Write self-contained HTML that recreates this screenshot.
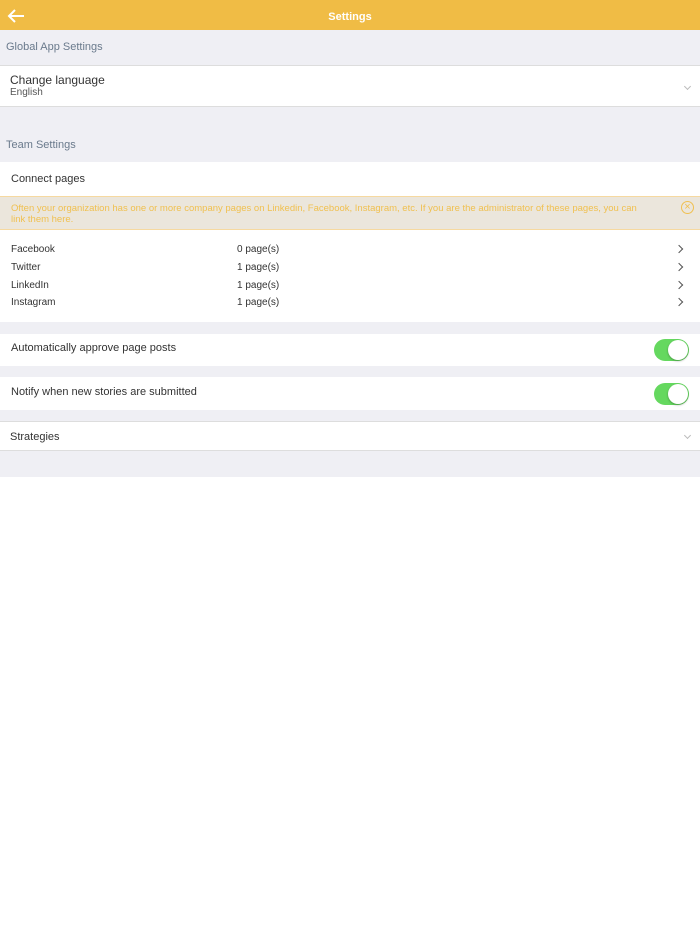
<!DOCTYPE html><html><head><style>
body{margin:0;width:700px;height:934px;background:#fff;font-family:"Liberation Sans",sans-serif;position:relative;overflow:hidden}
.a{position:absolute;left:0;width:700px}
.g{background:#efeff4}.w{background:#fff}
.t{position:absolute;font-size:11px;color:#333}
.chev{position:absolute;right:18px;width:5px;height:5px;border-right:1px solid #555;border-top:1px solid #555;transform:rotate(45deg)}
.dn{position:absolute;right:10px;width:4px;height:4px;border-right:1px solid #bbb;border-bottom:1px solid #bbb;transform:rotate(45deg)}
.tog{position:absolute;right:11px;width:35px;height:22px;border-radius:11px;background:#65d85f}
.tog::after{content:"";position:absolute;right:1px;top:1px;width:20px;height:20px;border-radius:50%;background:#fff;box-shadow:0 1px 2px rgba(0,0,0,.3)}
</style></head><body>
<div class="a" style="top:0;height:30px;background:#f0bc45"></div>
<svg style="position:absolute;left:7px;top:9px" width="18" height="14"><path d="M17 7H2M8 1L2 7l6 6" stroke="#fff" stroke-width="2" fill="none"/></svg>
<div class="t" style="top:11px;left:0;width:700px;text-align:center;color:#fff;font-weight:bold;font-size:11px">Settings</div>
<div class="a g" style="top:30px;height:447px"></div>
<div class="t" style="top:41px;left:6px;color:#6a7a8c;font-size:11px">Global App Settings</div>
<div class="a w" style="top:65px;height:40px;border-top:1px solid #ddd;border-bottom:1px solid #ddd"></div>
<div class="t" style="top:73px;left:10px;font-size:12px">Change language</div>
<div class="t" style="top:87px;left:10px;font-size:10px;color:#555">English</div>
<div class="dn" style="top:84px"></div>
<div class="t" style="top:139px;left:6px;color:#6a7a8c;font-size:11px">Team Settings</div>
<div class="a w" style="top:162px;height:34px"></div>
<div class="t" style="top:173px;left:11px;font-size:11px">Connect pages</div>
<div class="a" style="top:196px;height:32px;background:#ebe6dc;border-top:1px solid #f6d9a0;border-bottom:1px solid #f6d9a0"></div>
<div class="t" style="top:203px;left:11px;width:640px;font-size:9.5px;line-height:11px;color:#f0c050">Often your organization has one or more company pages on Linkedin, Facebook, Instagram, etc. If you are the administrator of these pages, you can link them here.</div>
<div style="position:absolute;left:681px;top:201px;width:11px;height:11px;border:1.3px solid #f0c050;border-radius:50%;color:#f0c050;font-size:11px;line-height:11px;text-align:center">×</div>
<div class="a w" style="top:230px;height:92px"></div>
<div class="t" style="top:244px;left:11px;font-size:10px">Facebook</div><div class="t" style="top:244px;left:237px;font-size:10px">0 page(s)</div><div class="chev" style="top:246px"></div>
<div class="t" style="top:262px;left:11px;font-size:10px">Twitter</div><div class="t" style="top:262px;left:237px;font-size:10px">1 page(s)</div><div class="chev" style="top:264px"></div>
<div class="t" style="top:280px;left:11px;font-size:10px">LinkedIn</div><div class="t" style="top:280px;left:237px;font-size:10px">1 page(s)</div><div class="chev" style="top:282px"></div>
<div class="t" style="top:297px;left:11px;font-size:10px">Instagram</div><div class="t" style="top:297px;left:237px;font-size:10px">1 page(s)</div><div class="chev" style="top:299px"></div>
<div class="a w" style="top:334px;height:32px"></div>
<div class="t" style="top:342px;left:11px">Automatically approve page posts</div><div class="tog" style="top:339px"></div>
<div class="a w" style="top:377px;height:33px"></div>
<div class="t" style="top:386px;left:11px">Notify when new stories are submitted</div><div class="tog" style="top:383px"></div>
<div class="a w" style="top:421px;height:28px;border-top:1px solid #ddd;border-bottom:1px solid #ddd"></div>
<div class="t" style="top:431px;left:10px">Strategies</div><div class="dn" style="top:433px"></div>
</body></html>
